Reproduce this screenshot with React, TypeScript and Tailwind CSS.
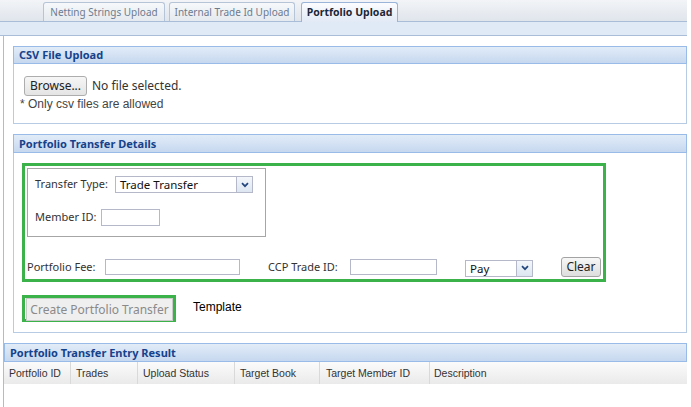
import React from "react";

const Chevron = () => (
  <svg width="8" height="6" viewBox="0 0 8 6">
    <path d="M1 1.2 L4 4.2 L7 1.2" stroke="#23467d" strokeWidth="1.7" fill="none" />
  </svg>
);

function Tab({ label, w, active }: { label: string; w: number; active?: boolean }) {
  if (active) {
    return (
      <div
        style={{ width: w }}
        className="relative z-10 -mb-px h-[20px] rounded-t-[3px] border border-b-0 border-[#99b4d8] bg-gradient-to-b from-[#fbfcfe] to-[#e2eaf6] text-center text-[10.5px] font-bold leading-[19px] text-[#1b2637]"
      >
        {label}
      </div>
    );
  }
  return (
    <div
      style={{ width: w }}
      className="h-[19px] rounded-t-[3px] border border-b-0 border-[#b6c4d8] bg-gradient-to-b from-[#f6f8fa] to-[#e5eaf0] text-center text-[10px] leading-[18px] text-[#6d7b8f]"
    >
      {label}
    </div>
  );
}

function Select({ w, value }: { w: number; value: string }) {
  return (
    <div style={{ width: w }} className="flex h-[17px] border border-[#b5b8c8] bg-white">
      <span className="flex-1 pl-[4px] text-[11.5px] leading-[15px] text-[#111]">{value}</span>
      <span className="flex w-[16px] items-center justify-center border-l border-[#b5b8c8] bg-gradient-to-b from-[#f4f7fb] to-[#dde6f1]">
        <Chevron />
      </span>
    </div>
  );
}

function Header({ children, w }: { children: React.ReactNode; w: number }) {
  return (
    <div
      style={{ width: w }}
      className="h-[19px] border border-[#99bbe8] bg-gradient-to-b from-[#e2ecf8] to-[#c6d8ef] pl-[5px] text-[11px] font-bold leading-[17px] text-[#15428b]"
    >
      {children}
    </div>
  );
}

export default function App() {
  return (
    <div className="h-[407px] w-[691px] overflow-hidden bg-white font-['Noto_Sans',sans-serif] text-[11px] text-[#222]">
      {/* tab strip */}
      <div className="flex h-[22px] w-[687px] items-end border-b border-[#a9bdd9] bg-gradient-to-b from-[#f2f4f7] to-[#e0e5ec] pl-[43px]">
        <Tab label="Netting Strings Upload" w={122} />
        <div className="w-[4px]" />
        <Tab label="Internal Trade Id Upload" w={126} />
        <div className="w-[6px]" />
        <Tab label="Portfolio Upload" w={97} active />
      </div>
      <div className="h-[14px] w-[687px] border-b border-[#a9bdd9] bg-[#e0e9f6]" />

      {/* body */}
      <div className="ml-[3px] h-[371px] w-[684px] border-l border-[#a9bdd9] pt-[10px]">
        {/* CSV panel */}
        <div className="ml-[9px] w-[674px]">
          <div className="h-[18px] border border-[#99bbe8] bg-gradient-to-b from-[#e2ecf8] to-[#c6d8ef] pl-[5px] text-[11px] font-bold leading-[16px] text-[#15428b]">
            CSV File Upload
          </div>
          <div className="h-[60px] border-x border-b border-[#b7cbe4] px-[10px] pt-[12px]">
            <div className="flex items-center">
              <div className="h-[20px] w-[63px] rounded-[3px] border border-[#adadad] bg-gradient-to-b from-[#f6f6f6] to-[#e4e4e4] text-center text-[12px] leading-[18px] text-[#222]">
                Browse...
              </div>
              <span className="ml-[5px] text-[12px] text-[#333]">No file selected.</span>
            </div>
            <div className="-ml-[4px] mt-[1px] font-['Liberation_Sans',Arial,sans-serif] text-[12px] leading-[14px] text-[#444]">
              * Only csv files are allowed
            </div>
          </div>
        </div>

        {/* Details panel */}
        <div className="ml-[9px] mt-[10px] w-[674px]">
          <Header w={674}>Portfolio Transfer Details</Header>
          <div className="h-[180px] border-x border-b border-[#b7cbe4] pl-[8px] pt-[10px]">
            <div className="h-[119px] w-[584px] border-[3px] border-[#3cb34a] p-[2px]">
              <div className="h-[69px] w-[239px] border border-[#a6a6a6] pl-[7px] pt-[7px]">
                <div className="flex h-[17px] items-center">
                  <span className="w-[80px] text-[11px] text-[#333]">Transfer Type:</span>
                  <Select w={138} value="Trade Transfer" />
                </div>
                <div className="mt-[16px] flex h-[17px] items-center">
                  <span className="w-[66px] text-[11px] text-[#333]">Member ID:</span>
                  <div className="h-[17px] w-[59px] border border-[#b5b8c8] bg-white" />
                </div>
              </div>
              <div className="mt-[20px] flex h-[20px] items-center">
                <span className="w-[78px] text-[11px] text-[#333]">Portfolio Fee:</span>
                <div className="h-[16px] w-[135px] border border-[#b5b8c8] bg-white" />
                <span className="ml-[28px] w-[82px] text-[11px] text-[#333]">CCP Trade ID:</span>
                <div className="h-[16px] w-[87px] border border-[#b5b8c8] bg-white" />
                <div className="ml-[28px] mt-[2px]">
                  <Select w={68} value="Pay" />
                </div>
                <div className="ml-[28px] h-[20px] w-[40px] rounded-[3px] border border-[#a3a3a3] bg-gradient-to-b from-[#f7f7f7] to-[#dedede] text-center text-[12px] leading-[18px] text-[#222]">
                  Clear
                </div>
              </div>
            </div>
            <div className="mt-[13px] flex items-center">
              <div className="h-[27px] w-[154px] border-[3px] border-[#3cb34a] bg-white">
                <div className="ml-px h-[23px] w-[147px] border border-[#c9c9c9] bg-[#efefef] text-center text-[12px] leading-[21px] text-[#8a8a8a]">
                  Create Portfolio Transfer
                </div>
              </div>
              <span className="mb-[4px] ml-[17px] font-['Liberation_Sans',Arial,sans-serif] text-[12px] text-black">
                Template
              </span>
            </div>
          </div>
        </div>

        {/* Results */}
        <div className="mt-[10px] w-[683px]">
          <Header w={683}>Portfolio Transfer Entry Result</Header>
          <div className="flex h-[22px] bg-gradient-to-b from-[#fbfbfb] to-[#eaeaea] font-['Liberation_Sans',Arial,sans-serif] text-[10.5px] leading-[22px] text-[#333]">
            <div className="w-[67px] border-r border-[#d9d9d9] pl-[5px]">Portfolio ID</div>
            <div className="w-[67px] border-r border-[#d9d9d9] pl-[5px]">Trades</div>
            <div className="w-[97px] border-r border-[#d9d9d9] pl-[5px]">Upload Status</div>
            <div className="w-[85px] border-r border-[#d9d9d9] pl-[5px]">Target Book</div>
            <div className="w-[110px] border-r border-[#d9d9d9] pl-[6px]">Target Member ID</div>
            <div className="flex-1 pl-[4px]">Description</div>
          </div>
        </div>
      </div>
    </div>
  );
}
